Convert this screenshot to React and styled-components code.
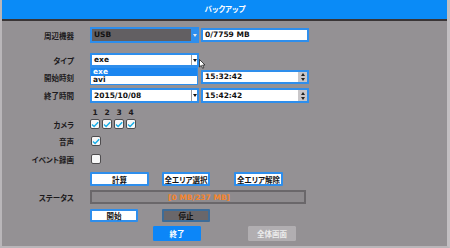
import styled, { createGlobalStyle } from 'styled-components'


const GlobalStyle = createGlobalStyle`
	* { box-sizing: border-box; }
	html, body {
		margin: 0;
		padding: 0;
		background: #949194;
	}
	body {
		font-family: "DejaVu Sans", "Noto Sans CJK JP", sans-serif;
	}
`

const Window = styled.div`
	width: 450px;
	height: 248px;
	display: flex;
	flex-direction: column;
	background: #949194;
	border-left: 2px solid #b9b6b9;
	border-right: 3px solid #c2bfc2;
	border-bottom: 2px solid #b9b6b9;
	overflow: hidden;
`

const TitleBar = styled.header`
	flex: 0 0 21px;
	display: flex;
	align-items: center;
	justify-content: center;
	background: #0a8bf7;
	border-bottom: 2px solid #3a3536;
	margin: 0 -3px 0 -2px;
	color: #fff;
	font-family: "Noto Sans CJK JP", sans-serif;
	font-feature-settings: "palt";
	font-weight: 700;
	font-size: 7.5px;
	padding-bottom: 2px;
`

const Body = styled.div`
	display: flex;
	flex-direction: column;
	padding-top: 6px;
`

const Row = styled.div`
	display: flex;
	align-items: center;
	height: ${p => p.$h}px;
	margin-top: ${p => p.$mt || 0}px;
	position: relative;
`

const Label = styled.div`
	width: 72px;
	margin-right: 16px;
	text-align: right;
	font-family: "Noto Sans CJK JP", sans-serif;
	font-feature-settings: "palt";
	font-weight: 700;
	font-size: 7.5px;
	color: #1c1a1c;
	white-space: nowrap;
`

const Controls = styled.div`
	display: flex;
	align-items: center;
	gap: ${p => p.$gap || 2}px;
	padding-left: ${p => p.$pl || 0}px;
`

const Field = styled.div`
	position: relative;
	display: flex;
	align-items: center;
	width: ${p => p.$w}px;
	height: ${p => p.$h}px;
	background: ${p => (p.$dark ? '#625f62' : '#fff')};
	border: 2px solid #2e8eec;
	padding-left: 2px;
	font-size: 7.5px;
	font-weight: 700;
	color: #111;
	white-space: nowrap;
`

const Value = styled.span`
	flex: 1;
	line-height: 1;
`

const SelectArrow = styled.div`
	align-self: stretch;
	width: 6px;
	display: flex;
	align-items: center;
	justify-content: center;
	background: ${p => (p.$blue ? '#2e8eec' : '#fff')};
	border-left: 1px solid ${p => (p.$blue ? '#2e8eec' : '#9a9a9a')};
	&::after {
		content: '';
		border-left: 2px solid transparent;
		border-right: 2px solid transparent;
		border-top: 3px solid ${p => (p.$blue ? '#e8e8e8' : '#111')};
	}
`

const Spinner = styled.div`
	align-self: stretch;
	width: 9px;
	display: flex;
	flex-direction: column;
	align-items: center;
	justify-content: center;
	gap: 2px;
	background: #c9c7c9;
	&::before {
		content: '';
		border-left: 2.5px solid transparent;
		border-right: 2.5px solid transparent;
		border-bottom: 3px solid #222;
	}
	&::after {
		content: '';
		border-left: 2.5px solid transparent;
		border-right: 2.5px solid transparent;
		border-top: 3px solid #222;
	}
`

const Dropdown = styled.ul`
	position: absolute;
	left: 88px;
	top: 14px;
	width: 108px;
	margin: 0;
	padding: 0;
	list-style: none;
	background: #fff;
	border: 1px solid #2e8eec;
	z-index: 2;
	font-size: 7.5px;
	font-weight: 700;
`

const Option = styled.li`
	height: 8px;
	line-height: 8px;
	padding-left: 2px;
	background: ${p => (p.$active ? '#1a86f0' : '#fff')};
	color: ${p => (p.$active ? '#fff' : '#111')};
`

const Cursor = styled.svg`
	position: absolute;
	left: 197px;
	top: 6px;
	z-index: 3;
`

const Numbers = styled.div`
	display: flex;
	gap: 2px;
	padding-left: 88px;
`

const Num = styled.span`
	width: 10px;
	text-align: center;
	font-size: 7.5px;
	font-weight: 700;
	color: #1c1a1c;
	line-height: 8px;
`

const Check = styled.div`
	width: 10px;
	height: 10px;
	display: flex;
	align-items: center;
	justify-content: center;
	background: #f7f7f7;
	border: 1px solid #4e4c4e;
	border-radius: 2px;
`

const Button = styled.div`
	width: ${p => p.$w}px;
	height: ${p => p.$h || 14}px;
	display: flex;
	align-items: center;
	justify-content: center;
	font-family: "Noto Sans CJK JP", sans-serif;
	font-feature-settings: "palt";
	font-weight: 700;
	font-size: 7.5px;
	white-space: nowrap;
	border-radius: 1px;
	${p => {
		switch (p.$kind) {
			case 'stop':
				return 'background: #6a676a; border: 2px solid #3d6c98; color: #111;'
			case 'primary':
				return 'background: #0c86f8; border: 1px solid #0c86f8; color: #fff;'
			case 'disabled':
				return 'background: #b1aeb1; border: 1px solid #b1aeb1; color: #ececec;'
			default:
				return 'background: #fff; border: 2px solid #2e8eec; color: #111;'
		}
	}}
`

const StatusBar = styled.div`
	width: 216px;
	height: 14px;
	display: flex;
	align-items: center;
	justify-content: center;
	background: #8e8b8e;
	border: 2px solid #6a676a;
	color: #f7852c;
	font-size: 7.5px;
	font-weight: 700;
	padding-left: 2px;
`

const Tick = () => (
	<svg width="8" height="7" viewBox="0 0 8 7">
		<path d="M1 3.6 L3.1 5.6 L7.2 1.2" fill="none" stroke="#17aee8" strokeWidth="1.4" />
	</svg>
)

const App = () => {
	return (
		<>
			<GlobalStyle />
			<Window>
				<TitleBar>バックアップ</TitleBar>
				<Body>
					<Row $h={16}>
						<Label>周辺機器</Label>
						<Controls>
							<Field $w={109} $h={16} $dark>
								<Value>USB</Value>
								<SelectArrow $blue />
							</Field>
							<Field $w={108} $h={14}>
								<Value>0/7759 MB</Value>
							</Field>
						</Controls>
					</Row>

					<Row $h={14} $mt={10}>
						<Label>タイプ</Label>
						<Controls>
							<Field $w={109} $h={14}>
								<Value>exe</Value>
								<SelectArrow />
							</Field>
						</Controls>
						<Dropdown>
							<Option $active>exe</Option>
							<Option>avi</Option>
						</Dropdown>
						<Cursor width="7" height="10" viewBox="0 0 7 10">
							<path d="M0.5 0.5 L0.5 8 L2.3 6.4 L3.6 9.3 L4.8 8.8 L3.6 6 L6 6 Z" fill="#fff" stroke="#222" strokeWidth="0.8" />
						</Cursor>
					</Row>

					<Row $h={14} $mt={3}>
						<Label>開始時刻</Label>
						<Controls $pl={111}>
							<Field $w={108} $h={14}>
								<Value>15:32:42</Value>
								<Spinner />
							</Field>
						</Controls>
					</Row>

					<Row $h={15} $mt={4}>
						<Label>終了時間</Label>
						<Controls>
							<Field $w={109} $h={15}>
								<Value>2015/10/08</Value>
								<SelectArrow />
							</Field>
							<Field $w={108} $h={15}>
								<Value>15:42:42</Value>
								<Spinner />
							</Field>
						</Controls>
					</Row>

					<Row $h={8} $mt={6}>
						<Numbers>
							{[1, 2, 3, 4].map(n => <Num key={n}>{n}</Num>)}
						</Numbers>
					</Row>

					<Row $h={10} $mt={2}>
						<Label>カメラ</Label>
						<Controls>
							{[1, 2, 3, 4].map(n => (
								<Check key={n}><Tick /></Check>
							))}
						</Controls>
					</Row>

					<Row $h={10} $mt={7}>
						<Label>音声</Label>
						<Controls $pl={1}>
							<Check><Tick /></Check>
						</Controls>
					</Row>

					<Row $h={10} $mt={8}>
						<Label>イベント録画</Label>
						<Controls $pl={1}>
							<Check />
						</Controls>
					</Row>

					<Row $h={14} $mt={8}>
						<Label />
						<Controls $gap={13}>
							<Button $w={59}>計算</Button>
							<Button $w={48}>全エリア選択</Button>
							<Button $w={49} style={{ marginLeft: 11 }}>全エリア解除</Button>
						</Controls>
					</Row>

					<Row $h={14} $mt={4}>
						<Label>ステータス</Label>
						<Controls>
							<StatusBar>[0 MB/237 MB]</StatusBar>
						</Controls>
					</Row>

					<Row $h={13} $mt={5}>
						<Label />
						<Controls $gap={24}>
							<Button $w={48} $h={13}>開始</Button>
							<Button $w={48} $h={13} $kind="stop">停止</Button>
						</Controls>
					</Row>

					<Row $h={15} $mt={4}>
						<Label />
						<Controls $gap={47} $pl={63}>
							<Button $w={48} $h={15} $kind="primary">終了</Button>
							<Button $w={48} $h={15} $kind="disabled">全体画面</Button>
						</Controls>
					</Row>
				</Body>
			</Window>
		</>
	)
}

export default App
